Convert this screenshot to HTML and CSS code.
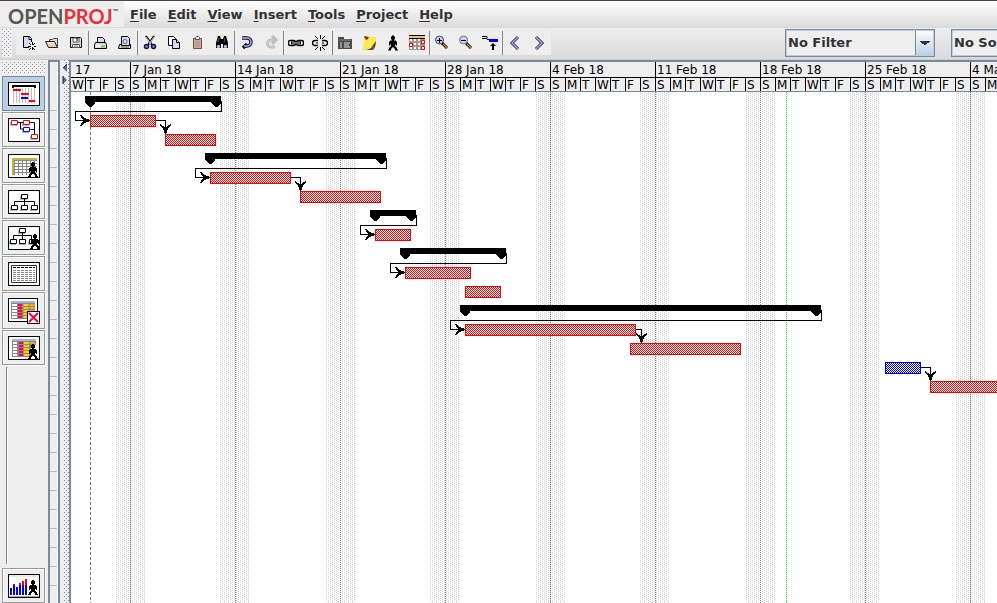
FILE: index.html
```html
<!DOCTYPE html>
<html lang="en">
<head>
<meta charset="utf-8">
<title>OpenProj</title>
<link rel="stylesheet" href="styles.css">
</head>
<body>
<svg class="defs" aria-hidden="true">
  <defs>
    <symbol id="person" viewBox="0 0 10 15"><path d="M4 0h2v1h1v3h-1v1h2v1h1v4h-1v-1h-1v2h1v1h1v2h1v1h-3v-2h-1v-1h-2v1h-1v2h-3v-1h1v-2h1v-1h1v-2h-1v1h-1v-4h1v-1h2v-1h-1v-3h1z"/></symbol>
  </defs>
</svg>

<header class="menubar">
  <div class="logo"><span class="open">OPEN</span><span class="proj">PROJ</span><span class="tm">™</span></div>
  <nav class="menus">
    <button><u>F</u>ile</button>
    <button><u>E</u>dit</button>
    <button><u>V</u>iew</button>
    <button><u>I</u>nsert</button>
    <button><u>T</u>ools</button>
    <button><u>P</u>roject</button>
    <button><u>H</u>elp</button>
  </nav>
</header>

<div class="toolbar">
  <div class="grip"></div>
  <div class="tools">
    <div class="group">
      <button aria-label="New"><svg viewBox="0 0 16 16"><path d="M3.500 1.500h6l2 2v9h-8z" fill="#d5d8f4" stroke="#000"/><path d="M9 1.500v3h3" fill="#fff" stroke="#000"/><path d="M12 7v8M8 11h8M9 8l6 6M15 8l-6 6" stroke="#eee" stroke-width="2"/><path d="M12.500 7v3M12.500 12v3M8 11.500h3M14 11.500h3M9 8l2 2M15 8l-2 2M9 15l2-2M15 15l-2-2" stroke="#000"/></svg></button>
      <button aria-label="Open"><svg viewBox="0 0 16 16"><path d="M5.500 6.500v-2h3l1-1h4v9h-1" fill="#ddd" stroke="#444"/><path d="M1.500 6.500h9l3 6h-9z" fill="#f4c9b4" stroke="#222"/><path d="M4 8h6" stroke="#fff"/></svg></button>
      <button aria-label="Save"><svg viewBox="0 0 16 16"><path d="M2.500 2.500h10l1 1v9h-11z" fill="#ddd" stroke="#000"/><path d="M5 3h6v4h-6z" fill="#fff" stroke="#555"/><path d="M9 3v3" stroke="#000"/><path d="M4.500 9.500h7v3h-7z" fill="#fff" stroke="#555"/><path d="M6 11h4" stroke="#777"/></svg></button>
    </div>
    <div class="group">
      <button aria-label="Print"><svg viewBox="0 0 16 16"><path d="M4.500 7.500v-5h5l2 2v3" fill="#d5d8f4" stroke="#000"/><path d="M2.500 7.500h10l1 2v4h-12v-4z" fill="#ddd" stroke="#000"/><path d="M3 11h7" stroke="#fff"/><path d="M8 11.500h4" stroke="#7c2" stroke-width="2"/></svg></button>
      <button aria-label="Print preview"><svg viewBox="0 0 16 16"><path d="M2.500 9.500h11v4h-12z" fill="#ddd" stroke="#000"/><path d="M4.500 10.500v-9h6l2 2v7z" fill="#d5d8f4" stroke="#000"/><circle cx="8" cy="6.500" r="2" fill="#eef" stroke="#557"/><path d="M4 12h8" stroke="#555"/></svg></button>
    </div>
    <div class="group">
      <button aria-label="Cut"><svg viewBox="0 0 16 16"><path d="M4 1l6 9M12 1l-6 9" stroke="#000" stroke-width="2"/><path d="M4 2l5 7M12 2l-5 7" stroke="#ccc"/><circle cx="4.500" cy="11.500" r="2" fill="#88d" stroke="#114" stroke-width="1.500"/><circle cx="11.500" cy="11.500" r="2" fill="#88d" stroke="#114" stroke-width="1.500"/></svg></button>
      <button aria-label="Copy"><svg viewBox="0 0 16 16"><path d="M2.500 1.500h5l2 2v7h-7z" fill="#fff" stroke="#000"/><path d="M6.500 4.500h4l3 3v6h-7z" fill="#d5d8f4" stroke="#000"/><path d="M10.500 4.500v3h3" fill="#fff" stroke="#000"/></svg></button>
      <button aria-label="Paste"><svg viewBox="0 0 16 16"><path d="M3.500 3.500h8v10h-8z" fill="#cfaa98" stroke="#655"/><path d="M5.500 4.500v-2l1-1h2l1 1v2z" fill="#eee" stroke="#555"/><path d="M5 7h5M5 9h5M5 11h5" stroke="#b88c7c"/></svg></button>
      <button aria-label="Find"><svg viewBox="0 0 16 16"><path d="M4 1h2l1 3h2l1-3h2l2 7v5h-5v-4h-2v4h-5v-5z"/><circle cx="4.500" cy="11.500" r="1.700" fill="#b8bff0"/><circle cx="11.500" cy="11.500" r="1.700" fill="#b8bff0"/><path d="M5 3l-1 4M11 3l-1 4" stroke="#666"/></svg></button>
    </div>
    <div class="group">
      <button aria-label="Undo"><svg viewBox="0 0 16 16"><path d="M3 3h5a4 4 0 0 1 0 8h-2M4 13l4-4" fill="none" stroke="#113" stroke-width="3.500"/><path d="M3 3h5a4 4 0 0 1 0 8h-3" fill="none" stroke="#aab0e4" stroke-width="1.500"/></svg></button>
      <button aria-label="Redo" disabled><svg viewBox="0 0 16 16"><path d="M13 5h-5a3.500 3.500 0 0 0 0 7h4M9 1l4 4-4 4" fill="none" stroke="#bbb" stroke-width="3"/><path d="M12 5h-4a3.500 3.500 0 0 0 0 7h3" fill="none" stroke="#d4d4d4"/></svg></button>
    </div>
    <div class="group">
      <button aria-label="Link"><svg viewBox="0 0 16 16"><rect x=".500" y="5.500" width="7" height="5" rx="2" fill="#fff" stroke="#000" stroke-width="1.500"/><rect x="8.500" y="5.500" width="7" height="5" rx="2" fill="#fff" stroke="#000" stroke-width="1.500"/><path d="M3 8h10" stroke="#000" stroke-width="3"/><path d="M4 8h8" stroke="#ddd"/></svg></button>
      <button aria-label="Unlink"><svg viewBox="0 0 16 16"><path d="M6 5.500h-3a2.500 2.500 0 0 0 0 5h3M10 5.500h3a2.500 2.500 0 0 1 0 5h-3" fill="none" stroke="#000" stroke-width="1.500"/><path d="M4 8h2M10 8h2M8.500 0v4M8.500 12v4M3 1l3 3M13 1l-3 3M3 15l3-3M13 15l-3-3" stroke="#000"/></svg></button>
    </div>
    <div class="group">
      <button aria-label="Information"><svg viewBox="0 0 16 16"><path d="M1 2h6v2h8v10h-14z" fill="#4a4a4a"/><path d="M2 5h12" stroke="#888"/><path d="M3 8h2M7 8h6M3 10h2M7 10h5M3 12h2M7 12h6" stroke="#ddd"/></svg></button>
      <button aria-label="Notes"><svg viewBox="0 0 16 16"><path d="M3 1l12 1v6l-2 6-12 1c2-3 2-9 2-14z" fill="#f8ea55"/><path d="M15 6c0 4-1 7-3 9h-11c5 0 9-1 11-5z" fill="#55522a"/><path d="M1 14.500c5 0 8-1 10-3" stroke="#f8ea55" fill="none"/><path d="M3 1l5 1-2 3-2-1z" fill="#a22"/></svg></button>
      <button aria-label="Resources"><svg viewBox="0 0 16 16"><use href="#person" x="3" width="10" height="16"/></svg></button>
      <button aria-label="Calendar"><svg viewBox="0 0 16 16"><path d="M0 1h16v14h-16z" fill="#999"/><path d="M0 1h16v2h-16z" fill="#fb6"/><path d="M0 .500h16M0 3.500h16" stroke="#000"/><path d="M1 4h2v2h-2zm4 0h2v2h-2zm4 0h2v2h-2zm-8 4h2v2h-2zm4 0h2v2h-2zm4 0h2v2h-2zm-8 4h2v2h-2zm4 0h2v2h-2zm4 0h2v2h-2z" fill="#fff"/><path d="M12.500 5.500h3v3h-3zM.500 8.500h3v3h-3zM12.500 11.500h3v3h-3z" fill="#fff" stroke="red"/></svg></button>
    </div>
    <div class="group">
      <button aria-label="Zoom in"><svg viewBox="0 0 16 16"><path d="M8 8l5 5" stroke="#000" stroke-width="3"/><path d="M9 9l4 4" stroke="#c84" stroke-width="1.500"/><circle cx="5.500" cy="5" r="4" fill="#c8cdf2" stroke="#446"/><path d="M3 5.500h5M5.500 3v5" stroke="#000"/></svg></button>
      <button aria-label="Zoom out"><svg viewBox="0 0 16 16"><path d="M8 8l5 5" stroke="#000" stroke-width="3"/><path d="M9 9l4 4" stroke="#c84" stroke-width="1.500"/><circle cx="5.500" cy="5" r="4" fill="#c8cdf2" stroke="#778"/><path d="M3 5.500h5" stroke="#000"/></svg></button>
      <button aria-label="Scroll to task"><svg viewBox="0 0 16 16"><path d="M0 1.500h5v2h-5" fill="#eee" stroke="#000"/><path d="M5 4.500h2" stroke="#000"/><path d="M7 4h9v3h-9z" fill="#00f"/><path d="M11 8l3 3h-2v4h-2v-4h-2z"/></svg></button>
    </div>
    <div class="group">
      <button aria-label="Previous"><svg viewBox="0 0 16 16"><path d="M11 2l-6 6 6 6" fill="none" stroke="#224" stroke-width="3"/><path d="M11 2l-6 6 6 6" fill="none" stroke="#a5abdf" stroke-width="1.500"/></svg></button>
      <button aria-label="Next"><svg viewBox="0 0 16 16"><path d="M5 2l6 6-6 6" fill="none" stroke="#224" stroke-width="3"/><path d="M5 2l6 6-6 6" fill="none" stroke="#a5abdf" stroke-width="1.500"/></svg></button>
    </div>
  </div>
  <div class="combos">
    <select aria-label="Filter"><option>No Filter</option></select>
    <select aria-label="Sort"><option>No Sort</option></select>
  </div>
</div>

<main class="workspace">
  <aside class="views">
    <div class="views-grip"></div>
    <button class="view active" aria-label="Gantt"><svg viewBox="0 0 32 24"><rect x=".500" y=".500" width="31" height="23" fill="#fff" stroke="#000"/><path d="M5.500 6v15M8.500 6v15M11.500 6v15M14.500 6v15M17.500 6v15M20.500 6v15M23.500 6v15M26.500 6v15" stroke="#bbb"/><path d="M4 3h24v3h-2v-1h-20v1h-2z"/><path d="M5 7h8v2h-8zM13 11h8v2h-8zM21 18h6v2h-6z" fill="red"/><path d="M13 15h7v2h-7z" fill="#00f"/></svg></button>
    <button class="view" aria-label="Network"><svg viewBox="0 0 32 24"><rect x=".500" y=".500" width="31" height="23" fill="#fff" stroke="#000"/><path d="M2 4h7v4h-7zM14 4h7v4h-7zM14 11h7v4h-7zM22 18h7v4h-7z" fill="#9ab8e6"/><path d="M9 4.500h6M12.500 4v7h3M21 4.500h5.500v12M21 11.500h5" fill="none" stroke="#000"/><g fill="#fff" stroke="red"><path d="M3.500 2.500h6v4h-6zM15.500 2.500h6v4h-6zM23.500 16.500h6v4h-6z"/><path d="M15.500 9.500h6v4h-6z" stroke="#00f"/></g></svg></button>
    <button class="view" aria-label="Resource sheet"><svg viewBox="0 0 32 24"><rect x=".500" y=".500" width="31" height="23" fill="#fff" stroke="#000"/><path d="M4 4h25v17h-25z" fill="#888"/><path d="M4 4h25v2h-25zM4 6h2v15h-2z" fill="#c8b03c"/><path d="M7 8h22M7 11h22M7 14h22M7 17h22M7 20h22" stroke="#fff" stroke-width="2" stroke-dasharray="3 1"/><use href="#person" x="20" y="8" width="10" height="15"/></svg></button>
    <button class="view" aria-label="WBS"><svg viewBox="0 0 32 24"><rect x=".500" y=".500" width="31" height="23" fill="#fff" stroke="#000"/><path d="M12 6h7v4h-7zM2 17h7v4h-7zM12 17h7v4h-7zM22 17h7v4h-7z" fill="#9ab8e6"/><path d="M16.500 8v8M6.500 16v-4.500h20v4.500" fill="none" stroke="#000"/><path d="M13.500 4.500h6v4h-6zM3.500 15.500h6v4h-6zM13.500 15.500h6v4h-6zM23.500 15.500h6v4h-6z" fill="#fff" stroke="#000"/></svg></button>
    <button class="view" aria-label="RBS"><svg viewBox="0 0 32 24"><rect x=".500" y=".500" width="31" height="23" fill="#fff" stroke="#000"/><path d="M10 4h7v4h-7zM1 15h7v4h-7zM11 15h7v4h-7zM20 15h7v4h-7z" fill="#9ab8e6"/><path d="M14.500 6v7M5.500 13v-3.500h18v4" fill="none" stroke="#000"/><path d="M11.500 2.500h6v4h-6zM2.500 13.500h6v4h-6zM11.500 13.500h6v4h-6zM21.500 13.500h6v4h-6z" fill="#fff" stroke="#000"/><use href="#person" x="22" y="8" width="10" height="15"/></svg></button>
    <button class="view" aria-label="Report"><svg viewBox="0 0 32 24"><rect x=".500" y=".500" width="31" height="23" fill="#fff" stroke="#000"/><path d="M3.500 3.500h25v17h-25z" fill="#fff" stroke="#333"/><path d="M5 5.500h22" stroke="#000" stroke-dasharray="3 1"/><path d="M5 8.500h22M5 10.500h22M5 12.500h22M5 14.500h22M5 16.500h22M5 18.500h22" stroke="#888" stroke-dasharray="3 1"/></svg></button>
    <button class="view tall" aria-label="Task usage"><svg viewBox="0 0 32 26"><rect x=".500" y=".500" width="29" height="23" fill="#fff" stroke="#000"/><path d="M3 3h24v18h-24z" fill="#888"/><path d="M3 3h24v2h-24z" fill="#9ab8e6"/><g stroke-dasharray="2 1"><path d="M6.500 6v15" stroke="#fff" stroke-width="5"/><path d="M12 6v15" stroke="#f04" stroke-width="4"/><path d="M18 6v15" stroke="#fc0" stroke-width="5"/><path d="M24 6v7" stroke="#fa0" stroke-width="5"/></g><rect x="19.500" y="13.500" width="12" height="12" fill="#fff" stroke="#000"/><path d="M21 15l9 9M30 15l-9 9" stroke="#f04" stroke-width="2"/></svg></button>
    <button class="view" aria-label="Resource usage"><svg viewBox="0 0 32 24"><rect x=".500" y=".500" width="31" height="23" fill="#fff" stroke="#000"/><path d="M4 3h24v18h-24z" fill="#888"/><path d="M4 3h24v2h-24z" fill="#9ab8e6"/><g stroke-dasharray="2 1"><path d="M7 6v15" stroke="#fff" stroke-width="4"/><path d="M13 6v15" stroke="#f04" stroke-width="4"/><path d="M18.500 6v15" stroke="#fc0" stroke-width="5"/><path d="M24.500 6v3" stroke="#fa0" stroke-width="5"/></g><path d="M23 9h5v12h-5z" fill="#fff"/><use href="#person" x="20" y="8" width="10" height="15"/></svg></button>
    <div class="views-rail"></div>
    <button class="view" aria-label="Histogram"><svg viewBox="0 0 32 24"><rect x=".500" y=".500" width="31" height="23" fill="#fff" stroke="#000"/><path d="M1 2h30" stroke="#fca" stroke-width="1"/><path d="M1 22.500h30" stroke="#aaa"/><path d="M2 14h2v7h-2zM5 11h2v10h-2zM8 13h2v8h-2zM11 11h2v10h-2zM14 11h2v10h-2zM17 11h2v10h-2z" fill="#00f"/><path d="M5 10h2v1h-2zM11 9h2v2h-2zM14 7h2v4h-2zM17 5h2v6h-2z" fill="red"/><use href="#person" x="20" y="6" width="10" height="15"/></svg></button>
  </aside>

  <div class="sheet"><div class="rows"></div></div>

  <div class="splitter">
    <svg viewBox="0 0 6 20"><path d="M5 0v8l-4-4zM1 12v8l4-4z" fill="#4a68b4"/><path d="M5 0l-4 4M1 12v8" stroke="#223"/></svg>
  </div>

  <section class="gantt">
    <div class="scale">
      <div class="week first"><b>17</b><i>W</i><i>T</i><i>F</i><i>S</i></div>
      <div class="week"><b>7 Jan 18</b><i>S</i><i>M</i><i>T</i><i>W</i><i>T</i><i>F</i><i>S</i></div>
      <div class="week"><b>14 Jan 18</b><i>S</i><i>M</i><i>T</i><i>W</i><i>T</i><i>F</i><i>S</i></div>
      <div class="week"><b>21 Jan 18</b><i>S</i><i>M</i><i>T</i><i>W</i><i>T</i><i>F</i><i>S</i></div>
      <div class="week"><b>28 Jan 18</b><i>S</i><i>M</i><i>T</i><i>W</i><i>T</i><i>F</i><i>S</i></div>
      <div class="week"><b>4 Feb 18</b><i>S</i><i>M</i><i>T</i><i>W</i><i>T</i><i>F</i><i>S</i></div>
      <div class="week"><b>11 Feb 18</b><i>S</i><i>M</i><i>T</i><i>W</i><i>T</i><i>F</i><i>S</i></div>
      <div class="week"><b>18 Feb 18</b><i>S</i><i>M</i><i>T</i><i>W</i><i>T</i><i>F</i><i>S</i></div>
      <div class="week"><b>25 Feb 18</b><i>S</i><i>M</i><i>T</i><i>W</i><i>T</i><i>F</i><i>S</i></div>
      <div class="week"><b>4 Mar 18</b><i>S</i><i>M</i></div>
    </div>
    <svg class="chart" shape-rendering="crispEdges">
      <defs>
        <pattern id="dots" width="4" height="2" patternUnits="userSpaceOnUse"><path d="M0 0h1v1h-1zM2 1h1v1h-1z" fill="#d0d0d0"/></pattern>
        <pattern id="red" width="2" height="2" patternUnits="userSpaceOnUse"><path d="M0 0h2v2h-2z" fill="#fff"/><path d="M0 0h1v1h-1zM1 1h1v1h-1z" fill="red"/></pattern>
        <pattern id="blue" width="2" height="2" patternUnits="userSpaceOnUse"><path d="M0 0h2v2h-2z" fill="#fff"/><path d="M0 0h1v1h-1zM1 1h1v1h-1z" fill="#00f"/></pattern>
        <path id="right" d="M1 0v1l-5 2-4 3h-1l3-5v-1l-3-5h1l4 3z"/>
        <path id="down" d="M0 1h1l2-5 3-4v-1l-5 3h-1l-5-3v1l3 4z"/>
      </defs>
      <g transform="translate(-71 -92)">
        <g fill="url(#dots)">
          <path d="M115 92h30v2000h-30zM220 92h30v2000h-30zM325 92h30v2000h-30zM430 92h30v2000h-30zM535 92h30v2000h-30zM640 92h30v2000h-30zM745 92h30v2000h-30zM850 92h30v2000h-30zM955 92h30v2000h-30z"/>
        </g>
        <path class="weeks" d="M130.500 92v2000M235.500 92v2000M340.500 92v2000M445.500 92v2000M550.500 92v2000M655.500 92v2000M760.500 92v2000M865.500 92v2000M970.500 92v2000"/>
        <path class="start" d="M90.500 92v2000"/>
        <path class="status" d="M786.500 92v2000"/>

        <g class="summary">
          <path d="M85 96h136v7l-4 4h-2l-4-4v-1h-116v1l-4 4h-2l-4-4z"/>
          <path d="M205 153h181v7l-4 4h-2l-4-4v-1h-161v1l-4 4h-2l-4-4z"/>
          <path d="M370 210h46v7l-4 4h-2l-4-4v-1h-26v1l-4 4h-2l-4-4z"/>
          <path d="M400 248h106v7l-4 4h-2l-4-4v-1h-86v1l-4 4h-2l-4-4z"/>
          <path d="M460 305h361v7l-4 4h-2l-4-4v-1h-341v1l-4 4h-2l-4-4z"/>
        </g>

        <g class="link">
          <path d="M221.500 101v10.500h-146v9h14"/>
          <path d="M386.500 158v10.500h-191v9h14"/>
          <path d="M416.500 215v10.500h-56v9h14"/>
          <path d="M506.500 253v10.500h-116v9h14"/>
          <path d="M821.500 310v10.500h-371v9h14"/>
          <path d="M156 120.500h9.500v12M291 177.500h9.500v12M636 329.500h5.500v12M921 367.500h9.500v12"/>
        </g>
        <use href="#right" x="89" y="120"/><use href="#right" x="209" y="177"/><use href="#right" x="374" y="234"/><use href="#right" x="404" y="272"/><use href="#right" x="464" y="329"/>
        <use href="#down" x="165" y="133"/><use href="#down" x="300" y="190"/><use href="#down" x="641" y="342"/><use href="#down" x="930" y="380"/>

        <g class="task">
          <rect x="90.500" y="115.500" width="65" height="11"/>
          <rect x="165.500" y="134.500" width="50" height="11"/>
          <rect x="210.500" y="172.500" width="80" height="11"/>
          <rect x="300.500" y="191.500" width="80" height="11"/>
          <rect x="375.500" y="229.500" width="35" height="11"/>
          <rect x="405.500" y="267.500" width="65" height="11"/>
          <rect x="465.500" y="286.500" width="35" height="11"/>
          <rect x="465.500" y="324.500" width="170" height="11"/>
          <rect x="630.500" y="343.500" width="110" height="11"/>
          <rect x="930.500" y="381.500" width="110" height="11"/>
          <rect class="slack" x="885.500" y="362.500" width="35" height="11"/>
        </g>
      </g>
    </svg>
  </section>
</main>
</body>
</html>
```
FILE: styles.css
```css
* { box-sizing: border-box; }

body {
  margin: 0;
  height: 100vh;
  display: flex;
  flex-direction: column;
  overflow: hidden;
  background: #eee;
  color: #333;
  font: 13px "DejaVu Sans", sans-serif;
}

button {
  margin: 0;
  padding: 0;
  border: 0;
  background: none;
  color: inherit;
  font: inherit;
}

.defs { position: absolute; width: 0; height: 0; }

/* Menu bar */
.menubar {
  flex: none;
  display: flex;
  height: 28px;
  border-top: 1px solid #444;
  background: linear-gradient(#fff, #dadada);
}

.logo {
  display: flex;
  width: 124px;
  height: 26px;
  padding: 4px 0 0 8px;
  background: #eee;
  font: bold 20px/23px Lato, sans-serif;
}

.open { color: #585850; }
.proj { color: #ea3038; }
.tm { color: #555; font-size: 7px; line-height: 12px; }

.menus {
  display: flex;
  gap: 11px;
  padding-left: 6px;
  font-weight: bold;
  line-height: 26px;
}

.menus u { text-underline-offset: 2px; }

/* Toolbar */
.toolbar {
  flex: none;
  display: flex;
  height: 32px;
  border-bottom: 1px solid #ccc;
  background: linear-gradient(#eee, #dadada);
}

.grip,
.views-grip {
  background:
    conic-gradient(at 1px 1px, transparent 75%, #8a97a4 0) 0 0 / 4px 4px,
    conic-gradient(at 1px 1px, transparent 75%, #8a97a4 0) 2px 2px / 4px 4px,
    #f2f2f2;
}

.grip {
  flex: none;
  width: 10px;
  margin: 1px 4px 2px 2px;
}

.tools {
  flex: none;
  display: flex;
  height: 24px;
  margin-top: 3px;
  background: #eee;
}

.group { display: flex; }
.group + .group { border-left: 1px solid #888; }

.group button {
  display: flex;
  align-items: center;
  justify-content: center;
  width: 24px;
  height: 24px;
}

.group svg { width: 16px; height: 16px; }

.combos {
  flex: 1;
  display: flex;
  gap: 16px;
  min-width: 0;
  overflow: hidden;
  padding: 1px 0 0 234px;
}

select {
  flex: none;
  appearance: none;
  width: 150px;
  height: 28px;
  padding: 0 0 2px 2px;
  border: 1px solid #7a8a99;
  border-radius: 0;
  outline: 1px solid #b8cfe5;
  outline-offset: -2px;
  background:
    linear-gradient(to bottom right, #333 50%, transparent 50%) right 4px top 11px / 5px 5px no-repeat,
    linear-gradient(to bottom left, #333 50%, transparent 50%) right 9px top 11px / 5px 5px no-repeat,
    linear-gradient(#7a8a99, #7a8a99) right 18px top / 1px 100% no-repeat,
    linear-gradient(#fff, #b8cfe5) right / 18px 100% no-repeat,
    #eee;
  color: #333;
  font: bold 13px "DejaVu Sans", sans-serif;
}

/* Workspace */
.workspace { flex: 1; display: flex; min-height: 0; }

.views {
  flex: none;
  display: flex;
  flex-direction: column;
  width: 48px;
  padding: 0 3px 0 2px;
}

.views-grip {
  flex: none;
  height: 12px;
  margin: 2px 0;
}

.view {
  flex: none;
  height: 35px;
  margin-bottom: 1px;
  padding: 5px;
  border: 1px solid #999;
  box-shadow: inset 1px 1px #fff, 1px 1px #fff;
  text-align: left;
}

.view.active { border-color: #7a8a99; background: #b8cfe5; box-shadow: none; }
.view.tall { height: 37px; }
.view:last-child { margin-bottom: 0; }
.view svg { display: block; width: 32px; height: 24px; }
.view.tall svg { height: 26px; }

.views-rail {
  flex: 1;
  width: 2px;
  margin: 1px 0 4px 4px;
  border-left: 1px solid #888;
  border-top: 1px solid #888;
  border-right: 1px solid #fff;
}

.sheet {
  flex: none;
  width: 12px;
  border: solid #7a8a99;
  border-width: 2px 2px 0 2px;
}

.rows {
  height: 100%;
  border-right: 1px solid #fff;
  background: repeating-linear-gradient(transparent 0 10px, #bbb 10px 11px, transparent 11px 19px);
  background-clip: padding-box;
}

.rows::before {
  content: "";
  display: block;
  height: 48px;
  border-bottom: 1px solid #bbb;
  background: #eee;
}

.splitter {
  flex: none;
  width: 9px;
  padding-top: 4px;
  border-left: 3px solid #eee;
  background:
    conic-gradient(at 1px 1px, transparent 75%, #7a8a99 0) 1px 0 / 4px 4px,
    conic-gradient(at 1px 1px, transparent 75%, #7a8a99 0) 3px 2px / 4px 4px;
}

.splitter svg { display: block; width: 6px; height: 20px; margin-left: -1px; background: #eee; }

/* Gantt chart */
.gantt {
  flex: 1;
  display: flex;
  flex-direction: column;
  min-width: 0;
  border: solid #7a8a99;
  border-width: 2px 0 0 2px;
  background: #fff;
}

.scale {
  flex: none;
  display: flex;
  height: 30px;
  overflow: hidden;
  border-bottom: 1px solid #7a8a99;
  background: #eee;
  color: #000;
  font-size: 12px;
}

.week {
  flex: none;
  display: grid;
  grid-template: 15px 14px / repeat(7, 15px);
}

.week.first { grid-template-columns: 14px repeat(3, 15px); }

.week b {
  grid-column: 1 / -1;
  padding-left: 1px;
  border-left: 1px solid #000;
  font-weight: normal;
  line-height: 17px;
}

.week i {
  padding-left: 1px;
  border-left: 1px solid #000;
  border-top: 1px solid #000;
  font-style: normal;
  line-height: 14px;
}

.week.first b { padding-left: 4px; border-left: 0; }
.week.first b + i { border-left: 0; }

.chart { flex: 1; width: 100%; min-height: 0; }

.weeks { stroke: #777; stroke-dasharray: 1 1; }
.start { stroke: #777; stroke-dasharray: 3 2; }
.status { stroke: #0f0; stroke-dasharray: 1 1; }
.link { fill: none; stroke: #000; }
.task { fill: url(#red); stroke: red; }
.slack { fill: url(#blue); stroke: #00f; }
```
